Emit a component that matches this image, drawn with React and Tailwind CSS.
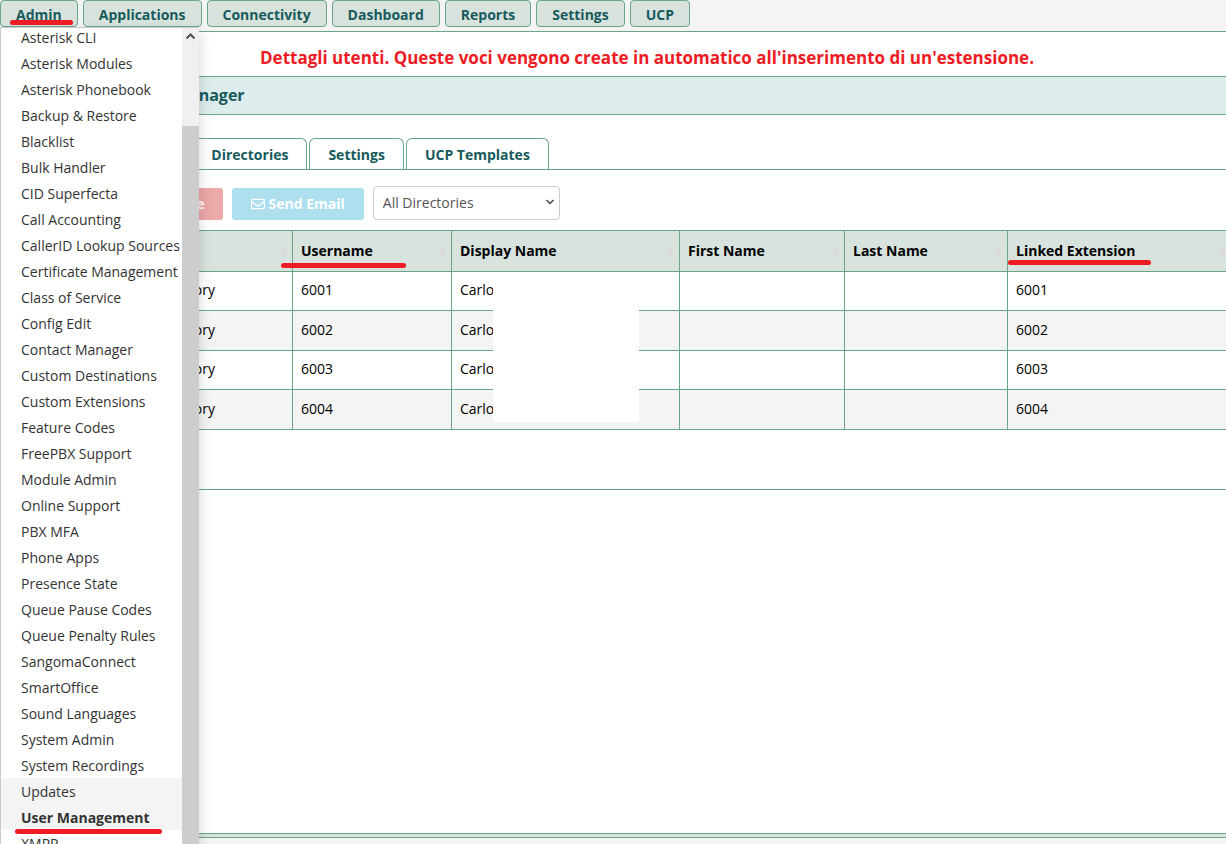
import React from 'react';
import clsx from 'clsx';
import { FaRegEnvelope } from 'react-icons/fa';

const navItems = ['Admin', 'Applications', 'Connectivity', 'Dashboard', 'Reports', 'Settings', 'UCP'];

const adminMenu = [
    'Asterisk CLI', 'Asterisk Modules', 'Asterisk Phonebook', 'Backup & Restore', 'Blacklist',
    'Bulk Handler', 'CID Superfecta', 'Call Accounting', 'CallerID Lookup Sources',
    'Certificate Management', 'Class of Service', 'Config Edit', 'Contact Manager',
    'Custom Destinations', 'Custom Extensions', 'Feature Codes', 'FreePBX Support',
    'Module Admin', 'Online Support', 'PBX MFA', 'Phone Apps', 'Presence State',
    'Queue Pause Codes', 'Queue Penalty Rules', 'SangomaConnect', 'SmartOffice',
    'Sound Languages', 'System Admin', 'System Recordings', 'Updates', 'User Management', 'XMPP',
];

const tabs = ['Users', 'Groups', 'Directories', 'Settings', 'UCP Templates'];

const columns = ['Directory', 'Username', 'Display Name', 'First Name', 'Last Name', 'Linked Extension'];

const users = ['6001', '6002', '6003', '6004'];

// Hand-drawn red underline, sits over whatever it marks
function Marker({ className }) {
    return <span aria-hidden="true" className={clsx('absolute z-20 h-[5px] rounded-sm bg-[#ed1c24]', className)} />;
}

function SortIcon() {
    return (
        <svg viewBox="0 0 7 13" className="h-[13px] w-[7px] shrink-0" fill="#dcd9db" aria-hidden="true">
            <path d="M3.500 0 7 6H0z" />
            <path d="M3.500 13 0 7.500h7z" />
        </svg>
    );
}

function NavBar() {
    return (
        <nav className="flex h-8 shrink-0 items-start gap-[5px] border-b border-[#6aa588] bg-[#f4f4f4]">
            {navItems.map(item => (
                <button key={item} type="button" className="relative h-[27px] rounded border border-[#6aa588] bg-[#d7e3dc] px-[15px] pt-[3px] font-bold text-[#175a5c]">
                    {item}
                    {item === 'Admin' && <Marker className="top-[19px] right-1 left-[9px]" />}
                </button>
            ))}
        </nav>
    );
}

function AdminMenu() {
    return (
        <div className="absolute top-[27px] bottom-0 left-0 z-10 flex w-[199px] overflow-hidden border border-r-0 border-b-0 border-[#cccccc] bg-white shadow-[0_6px_12px_rgba(0,0,0,0.18)]">
            <ul className="-mt-1 min-w-0 flex-1">
                {adminMenu.map(item => (
                    <li key={item} className={clsx('relative', (item === 'Updates' || item === 'User Management') && 'bg-[#f4f4f4]')}>
                        <a href="#" className={clsx('block h-[26px] pl-5 leading-7 whitespace-nowrap text-[#333333]', item === 'User Management' && 'font-bold')}>
                            {item}
                        </a>
                        {item === 'User Management' && <Marker className="top-[25px] right-5 left-[14px]" />}
                    </li>
                ))}
            </ul>
            <div className="flex w-[17px] shrink-0 flex-col bg-[#f0f0f0]">
                <svg viewBox="0 0 17 17" className="h-[17px] w-[17px]" fill="none" stroke="#505050" strokeWidth="2" aria-hidden="true">
                    <path d="M4.500 10.500 8.500 6.500 12.500 10.500" />
                </svg>
                <div className="mt-[81px] flex-1 bg-[#cdcdcd]" />
            </div>
        </div>
    );
}

function Toolbar() {
    return (
        <div className="flex items-end gap-[9px] pt-4 pl-[141px]">
            <button type="button" className="h-8 rounded-[3px] bg-[#eda8a8] px-[18px] font-bold text-white">Delete</button>
            <button type="button" className="flex h-8 items-center gap-1 rounded-[3px] bg-[#addfee] px-[19px] font-bold text-white">
                <FaRegEnvelope className="h-[14px] w-[14px]" />
                Send Email
            </button>
            <div className="relative">
                <select aria-label="Directory" className="h-[34px] w-[187px] appearance-none rounded border border-[#cccccc] bg-white pl-[9px] text-[#555555]">
                    <option>All Directories</option>
                </select>
                <svg viewBox="0 0 8 6" className="pointer-events-none absolute top-[13px] right-[6px] h-[6px] w-2" fill="none" stroke="#444444" strokeWidth="1.500" aria-hidden="true">
                    <path d="M.5 1 4 4.500 7.500 1" />
                </svg>
            </div>
        </div>
    );
}

function UsersTable() {
    return (
        <div className="relative mt-[10px] -mr-[6px] ml-5">
            <table className="w-full table-fixed border-collapse text-black">
                <colgroup>
                    <col className="w-[42px]" />
                    <col className="w-[230px]" />
                    <col className="w-[159px]" />
                    <col className="w-[228px]" />
                    <col className="w-[165px]" />
                    <col className="w-[163px]" />
                    <col />
                </colgroup>
                <thead>
                    <tr className="h-[41px] bg-[#d7e3dc]">
                        <th className="border border-[#6aa588]"><input type="checkbox" aria-label="Select all" /></th>
                        {columns.map(column => (
                            <th key={column} className="relative border border-[#6aa588] pr-[5px] pl-2 text-left font-bold">
                                <div className="flex items-center justify-between">
                                    {column}
                                    <SortIcon />
                                </div>
                                {column === 'Username' && <Marker className="-left-3 top-8 w-[125px]" />}
                                {column === 'Linked Extension' && <Marker className="top-[29px] left-0 w-[143px]" />}
                            </th>
                        ))}
                    </tr>
                </thead>
                <tbody>
                    {users.map(extension => (
                        <tr key={extension} className="h-[39px] even:h-[40px] even:bg-[#f4f4f4]">
                            <td className="border border-[#6aa588] text-center"><input type="checkbox" aria-label={`Select ${extension}`} /></td>
                            <td className="border border-[#6aa588] px-2 pb-0.5">PBX Internal Directory</td>
                            <td className="border border-[#6aa588] px-2 pb-0.5">{extension}</td>
                            <td className="border border-[#6aa588] px-2 pb-0.5">Carlo</td>
                            <td className="border border-[#6aa588]" />
                            <td className="border border-[#6aa588]" />
                            <td className="border border-[#6aa588] px-2 pb-0.5">{extension}</td>
                        </tr>
                    ))}
                </tbody>
            </table>
            {/* surnames are blanked out */}
            <div className="absolute top-[42px] left-[473px] h-[150px] w-[146px] bg-white" />
        </div>
    );
}

export default function App() {
    return (
        <div className="relative flex h-screen flex-col overflow-hidden bg-white font-['Open_Sans','Noto_Sans',sans-serif] text-[14px] leading-5">
            <NavBar />
            <AdminMenu />
            <main className="flex-1">
                <p className="h-11 pt-3 pl-[260px] text-[17px] leading-7 font-bold whitespace-nowrap text-[#ed1c24]">
                    Dettagli utenti. Queste voci vengono create in automatico all'inserimento di un'estensione.
                </p>
                <h1 className="h-[39px] border-y border-[#6aa588] bg-[#ddecec] pl-[133px] text-[16px] leading-[37px] font-bold text-[#175a5c]">User Manager</h1>
                <div className="mt-[23px] flex h-8 items-end gap-0.5 border-b border-[#6aa588] pl-[23px]">
                    {tabs.map(tab => (
                        <button key={tab} type="button" className="h-[31px] rounded-t-md border border-b-0 border-[#6aa588] bg-white px-[18px] pt-0.5 font-bold text-[#175a5c]">
                            {tab}
                        </button>
                    ))}
                </div>
                <Toolbar />
                <UsersTable />
                <div className="h-[60px] border-b border-[#6aa588]" />
            </main>
            <footer className="h-[11px] shrink-0 border-t border-[#6aa588] bg-[#f4f4f4]">
                <div className="h-1 border-b border-[#6aa588] bg-[#d7e3dc]" />
            </footer>
        </div>
    );
}
